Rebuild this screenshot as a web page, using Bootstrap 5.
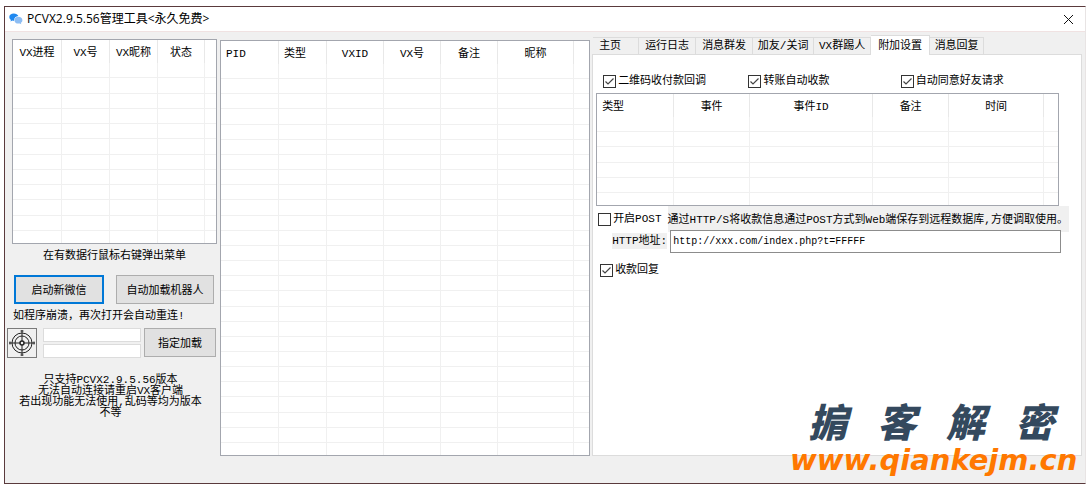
<!DOCTYPE html>
<html lang="zh-CN">
<head>
<meta charset="utf-8">
<meta name="viewport" content="width=device-width, initial-scale=1">
<title>PCVX2.9.5.56管理工具</title>
<link href="https://cdn.jsdelivr.net/npm/bootstrap@5.3.0/dist/css/bootstrap.min.css" rel="stylesheet">
<style>
  body { background: #fff; color: #000; font: 11px/14px "Liberation Mono", "Noto Sans CJK SC", monospace; }
  .app-shell { min-height: 100vh; padding: 6px 4px 3px; }
  .app-window { border: 1px solid #5a3a3c; border-right-color: #e8e4e4; background: #f0f0f0; position: relative; }
  .title-bar { height: 25px; background: #fff; border-bottom: 1px solid #f0e2e2; padding: 0 11px 0 4px; gap: 4px; font: 12px/24px "Open Sans", "Noto Sans CJK SC", sans-serif; }
  .close-x { border: 0; background: none; padding: 0; line-height: 0; }
  .work-area { display: grid; grid-template-columns: 214px minmax(0, 372fr) minmax(0, 493fr); padding: 2px 3px 27px 0; }
  .side-col { padding: 5px 2px 0 7px; }
  .list-box { border: 1px solid #a3a6ae; background: #fff; }
  .list-grid { width: 100%; height: 100%; table-layout: fixed; border-collapse: separate; border-spacing: 0; }
  .list-grid th { height: 23px; padding: 2px 0 0; font-weight: 400; text-align: center; white-space: nowrap; border-right: 1px solid #e8e8e8; }
  .list-grid th.start { text-align: left; padding-left: 5px; }
  .list-grid td { padding: 0; border-right: 1px solid #f0f0f0; border-bottom: 1px solid #f0f0f0; }
  .list-grid th:last-child, .list-grid td:last-child { border-right: 0; }
  .list-grid tr:last-child td { border-bottom: 0; height: 12px; }
  .side-list { height: 205px; }
  .mid-list { margin: 6px 0 0 1px; }
  .event-list { height: 113px; margin: 0 22px 0 3px; }
  .win-btn { border: 1px solid #adadad; border-radius: 0; background: #e1e1e1; color: #000; padding: 2px 0 0; height: 29px; font: inherit; flex: none; }
  .win-btn.primary { border: 2px solid #0078d7; }
  .win-field { border: 1px solid #dcdcdc; background: #fff; height: 14px; padding: 0 2px; width: 100%; display: block; font: inherit; }
  .aim-btn { width: 30px; height: 30px; border: 1px solid #7a7a7a; background: #f0f0f0; padding: 0; line-height: 0; flex: none; }
  .loader-row { margin: 4px 1px 0 -5px; }
  .hint { line-height: 16px; }
  .dense { line-height: 11px; margin-top: 17px; padding-right: 8px; white-space: nowrap; }
  .right-col { padding: 0 0 0 2px; }
  .tab-strip { height: 20px; align-items: flex-end; padding-left: 1px; }
  .tab-strip button { height: 17px; border: 1px solid #dcdcdc; border-left-width: 0; border-bottom: 0; background: #f0f0f0; color: #000; padding: 0; font: inherit; line-height: 16px; white-space: nowrap; text-align: center; }
  .tab-strip button.active { height: 20px; background: #fff; margin-bottom: -1px; position: relative; }
  .tab-home { width: 46px; padding-right: 11px !important; }
  .tab-log { width: 57px; } .tab-mid { width: 57px; } .tab-wide { width: 61px; }
  .tab-set { width: 59px; } .tab-reply { width: 54px; }
  .tab-page { border: 1px solid #dcdcdc; background: #fff; }
  .win-check { appearance: none; width: 13px; height: 13px; margin: 0; border: 1px solid #333; background: #fff; flex: none; }
  .win-check:checked { background: #fff url("data:image/svg+xml,%3Csvg xmlns='http://www.w3.org/2000/svg' viewBox='0 0 11 11'%3E%3Cpath d='M1.5 5.5 4 8l5.500-5.500' fill='none' stroke='%23444' stroke-width='1.200'/%3E%3C/svg%3E"); }
  .check-row { display: grid; grid-template-columns: 145fr 152fr 180fr; padding: 19px 0 5px 10px; }
  .tick-label { display: flex; align-items: center; gap: 2px; white-space: nowrap; }
  .post-note { background: #f0f0f0; height: 26px; line-height: 28px; white-space: nowrap; flex: 1; margin-right: 12px; }
  .post-row { padding-left: 5px; gap: 6px; }
  .url-row { padding: 0 20px 0 19px; gap: 3px; margin-top: -2px; position: relative; }
  .url-row label { background: #f0f0f0; height: 16px; line-height: 16px; margin-top: 3px; white-space: nowrap; }
  .url-field { flex: 1; min-width: 0; height: 23px; border: 1px solid #8c8c8c; padding: 0 2px; font: 10px/20px "Liberation Mono", monospace; color: #000; background: #fff; }
  .site-mark { position: absolute; right: 0; bottom: 7px; width: 295px; pointer-events: none; }
  .site-name { font: italic 900 39px/39px "Noto Sans CJK SC", sans-serif; color: #34495e; padding: 0 31px 0 18px; margin-bottom: 5px; }
  .site-url { display: block; font: italic 700 29px/31px "DejaVu Sans", sans-serif; color: #ff7800; white-space: nowrap; text-decoration: none; pointer-events: auto; }
</style>
</head>
<body>
<div class="app-shell d-flex flex-column">
  <div class="app-window d-flex flex-column flex-grow-1">
    <header class="title-bar d-flex align-items-center">
      <svg width="14" height="12" viewBox="0 0 14 12" aria-hidden="true">
        <path d="M4.800.500C2.200.500.300 2 .300 4c0 1.200.6 2.200 1.600 2.900L1.500 8.500l1.800-.9c.6.2 1.200.2 1.700.2C5 5 7 3.200 9.300 3.100 8.800 1.500 7 .500 4.800.500Z" fill="#1e88f0"/>
        <path d="M9.400 3.800c-2.300 0-4 1.500-4 3.400s1.700 3.400 4 3.400c.5 0 1-.1 1.400-.2l1.500.8-.4-1.400c1-.6 1.500-1.500 1.500-2.600 0-1.900-1.700-3.400-4-3.400Z" fill="#8dbdf3"/>
      </svg>
      <span class="flex-grow-1">PCVX2.9.5.56管理工具&lt;永久免费&gt;</span>
      <button class="close-x" type="button" aria-label="关闭"><svg width="11" height="11" viewBox="0 0 11 11"><path d="m1 1 9 9M10 1l-9 9" stroke="#111"/></svg></button>
    </header>
    <main class="work-area flex-grow-1">
      <section class="side-col">
        <div class="list-box side-list">
          <table class="list-grid" data-rows="12">
            <colgroup><col style="width:49px"><col style="width:48px"><col style="width:48px"><col style="width:47px"><col></colgroup>
            <thead><tr><th>VX进程</th><th>VX号</th><th>VX昵称</th><th>状态</th><th></th></tr></thead>
            <tbody></tbody>
          </table>
        </div>
        <div class="hint text-center" style="margin-top:4px">在有数据行鼠标右键弹出菜单</div>
        <div class="d-flex justify-content-between" style="margin:11px 3px 0 2px">
          <button class="win-btn primary" type="button" style="width:90px">启动新微信</button>
          <button class="win-btn" type="button" style="width:98px">自动加载机器人</button>
        </div>
        <div class="hint" style="margin:4px 0 0 1px">如程序崩溃，再次打开会自动重连!</div>
        <div class="loader-row d-flex">
          <button class="aim-btn" type="button" aria-label="选择窗口">
            <svg width="28" height="28" viewBox="0 0 28 28" fill="none" stroke="#222">
              <circle cx="14" cy="14" r="10"/><circle cx="14" cy="14" r="7"/><circle cx="14" cy="14" r="2" stroke-width="1.500"/>
              <path d="M14 1v11M14 16v11M1 14h11M16 14h11M12.500 2h3M12.500 26h3M2 12.500v3M26 12.500v3"/>
            </svg>
          </button>
          <div class="flex-grow-1 d-flex flex-column" style="gap:2px;margin:0 3px 0 6px;min-width:0">
            <input class="win-field" type="text" aria-label="窗口标题"><input class="win-field" type="text" aria-label="进程编号">
          </div>
          <button class="win-btn" type="button" style="width:72px">指定加载</button>
        </div>
        <div class="dense text-center">只支持PCVX2.9.5.56版本<br>无法自动连接请重启VX客户端<br>若出现功能无法使用,乱码等均为版本<br>不等</div>
      </section>

      <section class="d-flex">
        <div class="list-box mid-list flex-grow-1">
          <table class="list-grid" data-rows="26">
            <colgroup><col style="width:58px"><col style="width:48px"><col style="width:57px"><col style="width:57px"><col style="width:57px"><col style="width:76px"><col></colgroup>
            <thead><tr><th class="start">PID</th><th class="start">类型</th><th>VXID</th><th>VX号</th><th>备注</th><th>昵称</th><th></th></tr></thead>
            <tbody></tbody>
          </table>
        </div>
      </section>

      <section class="right-col d-flex flex-column">
        <div class="tab-strip d-flex" role="tablist">
          <button class="tab-home" role="tab" type="button">主页</button>
          <button class="tab-log" role="tab" type="button">运行日志</button>
          <button class="tab-mid" role="tab" type="button">消息群发</button>
          <button class="tab-wide" role="tab" type="button">加友/关词</button>
          <button class="tab-mid" role="tab" type="button">VX群踢人</button>
          <button class="tab-set active" role="tab" type="button" aria-selected="true">附加设置</button>
          <button class="tab-reply" role="tab" type="button">消息回复</button>
        </div>
        <div class="tab-page flex-grow-1">
          <div class="check-row">
            <label class="tick-label"><input class="win-check" type="checkbox" checked>二维码收付款回调</label>
            <label class="tick-label"><input class="win-check" type="checkbox" checked>转账自动收款</label>
            <label class="tick-label"><input class="win-check" type="checkbox" checked>自动同意好友请求</label>
          </div>
          <div class="list-box event-list">
            <table class="list-grid" data-rows="6">
              <colgroup><col style="width:77px"><col style="width:76px"><col style="width:123px"><col style="width:76px"><col style="width:95px"><col></colgroup>
              <thead><tr><th class="start">类型</th><th>事件</th><th>事件ID</th><th>备注</th><th>时间</th><th></th></tr></thead>
              <tbody></tbody>
            </table>
          </div>
          <div class="post-row d-flex align-items-center">
            <label class="tick-label"><input class="win-check" type="checkbox">开启POST</label>
            <div class="post-note">通过HTTP/S将收款信息通过POST方式到Web端保存到远程数据库,方便调取使用。</div>
          </div>
          <div class="url-row d-flex">
            <label for="post-url">HTTP地址:</label>
            <input class="url-field" id="post-url" type="text" value="http://xxx.com/index.php?t=FFFFF">
          </div>
          <div style="padding:10px 0 0 7px"><label class="tick-label"><input class="win-check" type="checkbox" checked>收款回复</label></div>
        </div>
      </section>
    </main>
    <div class="site-mark">
      <div class="site-name d-flex justify-content-between"><span>掮</span><span>客</span><span>解</span><span>密</span></div>
      <a class="site-url" href="#">www.qiankejm.cn</a>
    </div>
  </div>
</div>
<script>
  // Fill each list with its empty grid rows
  document.querySelectorAll('.list-grid').forEach(function (grid) {
    var cells = '<td></td>'.repeat(grid.tHead.rows[0].cells.length);
    grid.tBodies[0].innerHTML = ('<tr>' + cells + '</tr>').repeat(Number(grid.dataset.rows));
  });
</script>
<script src="https://cdn.jsdelivr.net/npm/bootstrap@5.3.0/dist/js/bootstrap.bundle.min.js"></script>
</body>
</html>
